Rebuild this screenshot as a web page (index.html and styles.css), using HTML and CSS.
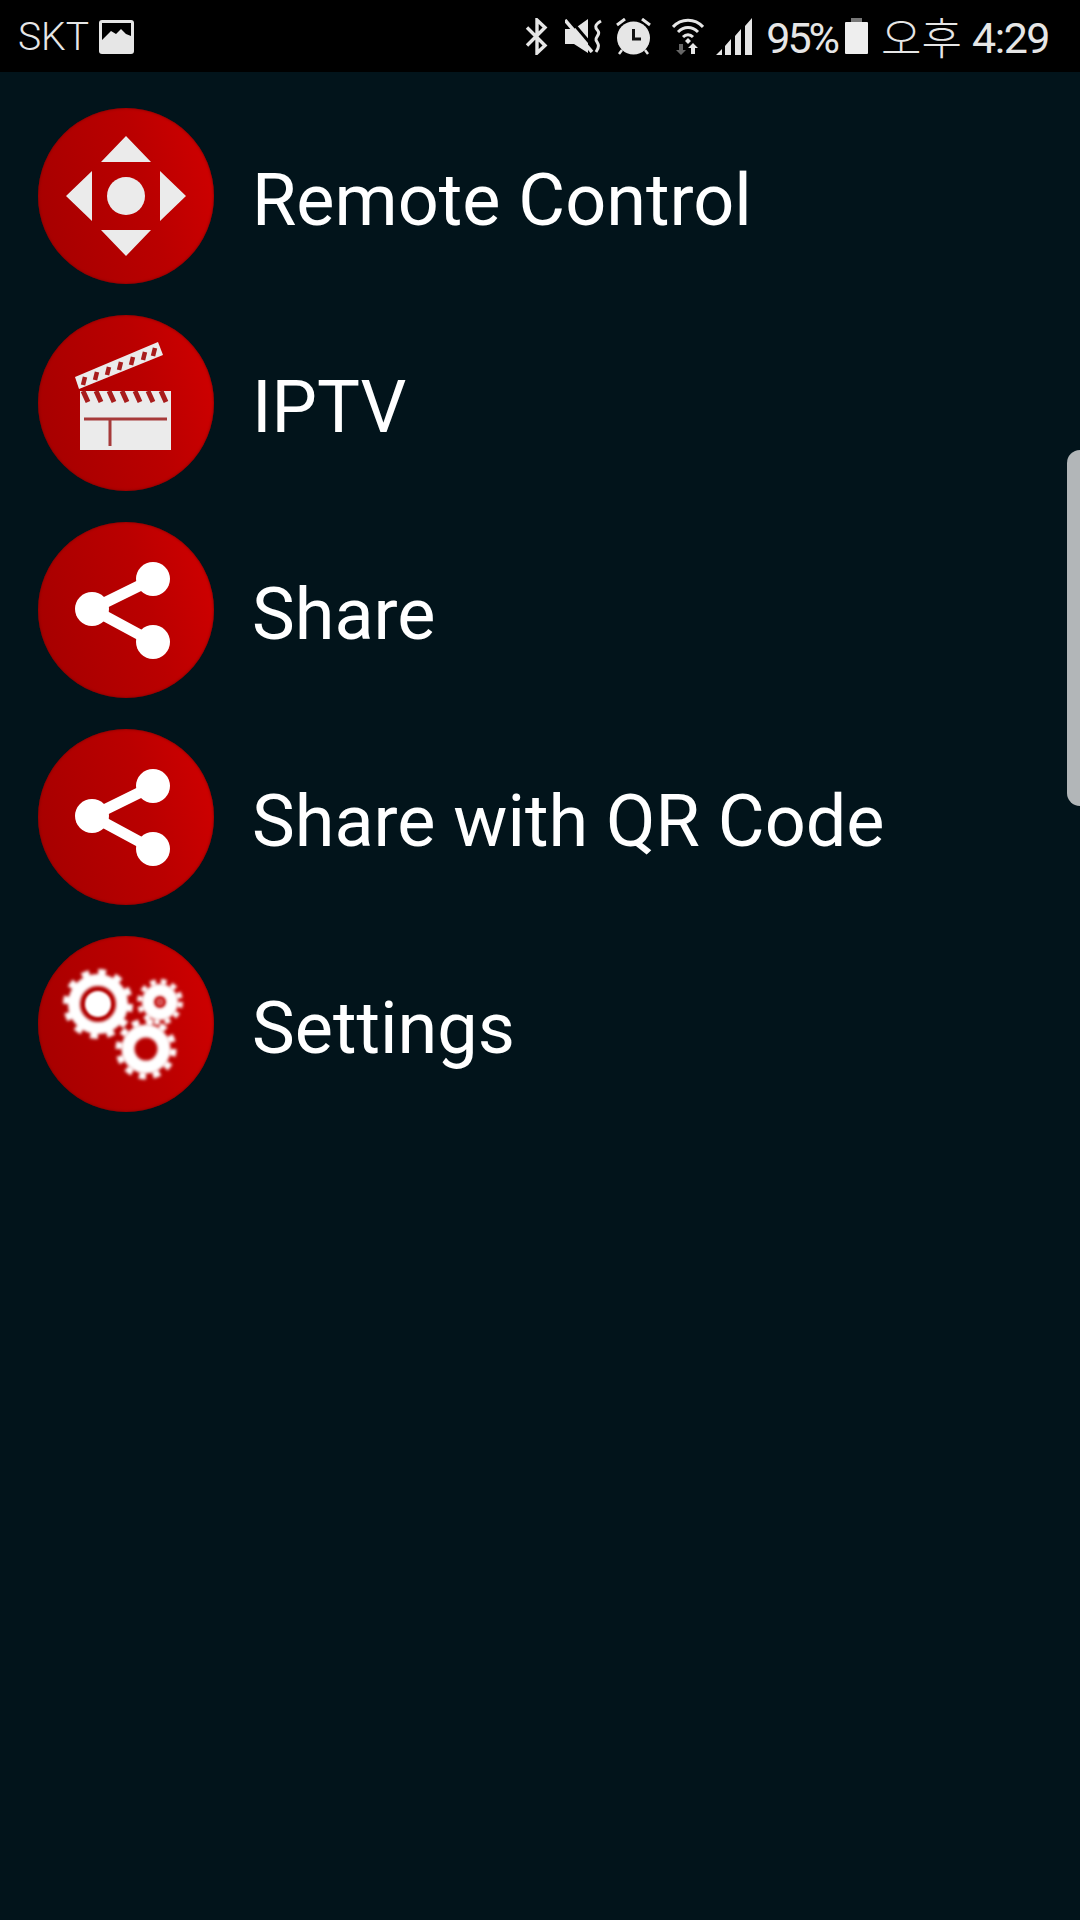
FILE: index.html
```html
<!DOCTYPE html>
<html lang="en">
<head>
<meta charset="utf-8">
<title>Menu</title>
<link rel="stylesheet" href="styles.css">
</head>
<body>
<div class="screen">
  <header class="status">
    <div class="status-left">
      <span class="carrier">SKT</span>
      <svg class="ic-image" viewBox="0 0 35 34"><rect width="35" height="34" rx="3" fill="#e6e6e6"/><path d="M3 3H32V16L27 14 22 9 17 14 12 11 3 20Z" fill="#000"/></svg>
    </div>
    <div class="status-right">
      <svg class="ic-bt" viewBox="0 0 23 37"><path d="M2 9.500 20 27.500 12 35V2L20 9.500 2 27.500" fill="none" stroke="#e6e6e6" stroke-width="3.400"/></svg>
      <svg class="ic-mute" viewBox="0 0 38 34"><path d="M0 10H9L23 0V34L9 25H0Z" fill="#e6e6e6"/><path d="M3 -2 30 30" stroke="#000" stroke-width="3"/><path d="M0 1 27 33" stroke="#e6e6e6" stroke-width="3.500"/><path d="M36 2C29 6 30 9 33 12 36 15 30 18 31 21 32 24 36 26 31 33" fill="none" stroke="#e6e6e6" stroke-width="3"/></svg>
      <svg class="ic-alarm" viewBox="0 0 35 37"><circle cx="17.500" cy="20" r="16.500" fill="#e6e6e6"/><path d="M17.500 11V21H25" fill="none" stroke="#111" stroke-width="3"/><path d="M1 7 9 1M26 1 34 7" stroke="#e6e6e6" stroke-width="3"/><path d="M6 32 3 36M29 32 32 36" stroke="#e6e6e6" stroke-width="2.500"/></svg>
      <svg class="ic-wifi" viewBox="0 0 32 37"><path d="M1 9C9 0 23 0 31 9M6 14C12 8 20 8 26 14M11 19C14 16 18 16 21 19" fill="none" stroke="#e6e6e6" stroke-width="3"/><path d="M16 20 19 23 16 26 13 23Z" fill="#e6e6e6"/><path d="M7 26H11V32H14L9 37 4 32H7Z" fill="#666"/><path d="M19 36V30H16L21 25 26 30H23V36Z" fill="#e6e6e6"/></svg>
      <svg class="ic-signal" viewBox="0 0 37 37"><path d="M0 37 6 31V37ZM9 37V28L15 21V37ZM19 37V18L25 11V37ZM29 37V8L36 0V37Z" fill="#e6e6e6"/></svg>
      <span class="status-text percent">95%</span>
      <svg class="ic-battery" viewBox="0 0 23 36"><rect x="6" width="11" height="5" fill="#777"/><rect y="4" width="23" height="32" rx="1" fill="#eee"/></svg>
      <span class="status-text meridiem">오후</span>
      <span class="status-text clock">4:29</span>
    </div>
  </header>

  <ul class="menu">
    <li class="menu-item">
      <svg class="menu-icon" viewBox="0 0 176 176">
        <path d="M88 28 113 54H63ZM88 148 63 122H113ZM28 88 54 63V113ZM148 88 122 113V63Z" fill="#ebebeb"/>
        <circle cx="88" cy="88" r="19" fill="#ebebeb"/>
      </svg>
      <span class="menu-label">Remote Control</span>
    </li>
    <li class="menu-item">
      <svg class="menu-icon soft" viewBox="0 0 176 176">
        <path d="M37 62 120 27 125 40 41 74Z" fill="#ebebeb"/>
        <path d="M47 62 45 70M59 57 57 65M71 52 69 60M83 47 81 55M95 42 93 50M107 37 105 45M117 33 115 41" stroke="#a81c1c" stroke-width="4.500"/>
        <rect x="42" y="76" width="91" height="59" fill="#ebebeb"/>
        <path d="M45 76 50 87M58 76 63 87M71 76 76 87M84 76 89 87M97 76 102 87M110 76 115 87M123 76 128 87" stroke="#a81c1c" stroke-width="5"/>
        <path d="M46 104H129M72 104V131" stroke="#a63a3a" stroke-width="3"/>
      </svg>
      <span class="menu-label">IPTV</span>
    </li>
    <li class="menu-item">
      <svg class="menu-icon soft" viewBox="0 0 176 176">
        <path d="M115 57 54 87 115 120" fill="none" stroke="#fff" stroke-width="11"/>
        <circle cx="54" cy="87" r="17" fill="#fff"/><circle cx="115" cy="57" r="17" fill="#fff"/><circle cx="115" cy="120" r="17" fill="#fff"/>
      </svg>
      <span class="menu-label">Share</span>
    </li>
    <li class="menu-item">
      <svg class="menu-icon soft" viewBox="0 0 176 176">
        <path d="M115 57 54 87 115 120" fill="none" stroke="#fff" stroke-width="11"/>
        <circle cx="54" cy="87" r="17" fill="#fff"/><circle cx="115" cy="57" r="17" fill="#fff"/><circle cx="115" cy="120" r="17" fill="#fff"/>
      </svg>
      <span class="menu-label">Share with QR Code</span>
    </li>
    <li class="menu-item">
      <svg class="menu-icon gears" viewBox="0 0 176 176">
        <g fill="none" stroke="#fff">
          <circle cx="60" cy="68" r="31" stroke-width="8" stroke-dasharray="7.500 8.730"/>
          <circle cx="60" cy="68" r="24" stroke-width="12"/>
          <circle cx="122" cy="66" r="20" stroke-width="6" stroke-dasharray="5.500 5"/>
          <circle cx="122" cy="66" r="12" stroke-width="12"/>
          <circle cx="108" cy="113" r="27" stroke-width="7" stroke-dasharray="7 7.100"/>
          <circle cx="108" cy="113" r="18" stroke-width="13"/>
        </g>
        <circle cx="60" cy="68" r="13" fill="#fff"/>
        <circle cx="122" cy="66" r="4" fill="#d65050"/>
      </svg>
      <span class="menu-label">Settings</span>
    </li>
  </ul>
  <div class="scrollbar"></div>
</div>
</body>
</html>
```

FILE: styles.css
```css
* { box-sizing: border-box; }
html, body { margin: 0; padding: 0; }
body { width: 1080px; height: 1920px; overflow: hidden; background: #02141b; font-family: Roboto, "Noto Sans CJK KR", sans-serif; }
.screen { position: relative; width: 1080px; height: 1920px; background: #02141b; }

.status { display: flex; justify-content: space-between; align-items: center; height: 72px; padding: 0 31px 0 18px; background: #000; color: #e6e6e6; }
.status-left, .status-right { display: flex; align-items: center; }
.carrier { font-size: 39px; font-weight: 300; line-height: 1; margin-top: 3px; }
.ic-image { width: 35px; height: 34px; margin-left: 10px; margin-top: 2px; }
.ic-bt { width: 23px; height: 37px; }
.ic-mute { width: 38px; height: 34px; margin-left: 17px; }
.ic-alarm { width: 35px; height: 37px; margin-left: 13px; }
.ic-wifi { width: 32px; height: 37px; margin-left: 21px; }
.ic-signal { width: 37px; height: 37px; margin-left: 12px; }
.ic-battery { width: 23px; height: 36px; margin-left: 8px; }
.status-text { font-size: 43px; line-height: 1; white-space: nowrap; margin-top: 5px; }
.percent { margin-left: 13px; letter-spacing: -3px; }
.meridiem { margin-left: 13px; margin-top: 0; font-family: "Noto Sans CJK KR", sans-serif; font-weight: 300; font-size: 44px; }
.clock { margin-left: 10px; letter-spacing: -1.500px; }

.menu { list-style: none; margin: 0; padding: 20px 0 0 38px; display: flex; flex-direction: column; }
.menu-item { display: flex; align-items: center; gap: 38px; height: 207px; }
.menu-icon { flex: none; width: 176px; height: 176px; border-radius: 50%; background: linear-gradient(75deg, #a40000 0%, #ba0000 60%, #d20000 100%); box-shadow: inset 0 0 3px #700; }
.soft > * { filter: blur(0.5px); }
.gears g, .gears circle { filter: blur(1.100px); }
.menu-label { font-size: 72px; line-height: 1; color: #fff; margin-top: 11px; white-space: nowrap; }

.scrollbar { position: absolute; top: 450px; right: 0; width: 13px; height: 356px; background: #b2b6b8; border-radius: 13px 0 0 13px; }
```
